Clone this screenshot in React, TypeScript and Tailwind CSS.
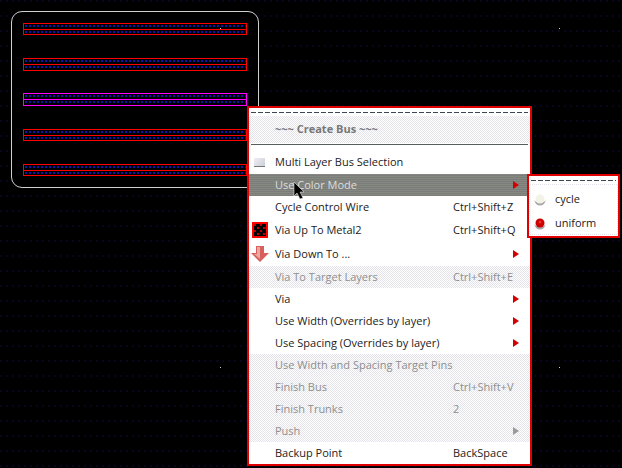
const busRows = [
  { id: "a", height: "h-[12px]", border: "border-[#ff0000]", gap: "" },
  { id: "b", height: "h-[13px]", border: "border-[#ff0000]", gap: "" },
  { id: "c", height: "h-[13px]", border: "border-[#ff00ff]", gap: "-mt-px" },
  { id: "d", height: "h-[12px]", border: "border-[#ff0000]", gap: "" },
  { id: "e", height: "h-[12px]", border: "border-[#ff0000]", gap: "" },
]

const gridMarks = ["left-[220px] top-[28px]", "left-[559px] top-[28px]", "left-[220px] top-[367px]", "left-[559px] top-[367px]"]

const dotted =
  "bg-black bg-[radial-gradient(circle_at_2px_2px,#1414b8_0.7px,transparent_0.8px)] bg-[length:4px_4px]"

const stipple =
  "bg-[repeating-conic-gradient(#e4e3e9_0_25%,#ffffff_0_50%)] bg-[length:2px_2px]"

function Arrow({ disabled }: { disabled?: boolean }) {
  return (
    <svg width="6" height="8" viewBox="0 0 6 8" className="ml-auto mr-[11px] shrink-0">
      <path d="M0 0 L6 4 L0 8 Z" fill={disabled ? "#9a9a9a" : "#d40000"} />
    </svg>
  )
}

function Row({
  label,
  accel,
  arrow,
  disabled,
  active,
  icon,
  height = "h-[22px]",
}: {
  label: string
  accel?: string
  arrow?: boolean
  disabled?: boolean
  active?: boolean
  icon?: React.ReactNode
  height?: string
}) {
  return (
    <div
      className={`flex items-center pl-[3px] ${height} ${
        active
          ? "bg-[repeating-linear-gradient(0deg,#7c7c7c_0_1px,#858a80_1px_2px)] text-[#dcdcdc]"
          : disabled
            ? `${stipple} text-[#8e8e8e]`
            : "text-[#222222]"
      }`}
    >
      <div className="flex w-[23px] shrink-0 items-center">{icon}</div>
      <span className="w-[178px] shrink-0 whitespace-nowrap">{label}</span>
      {accel && <span className="whitespace-nowrap">{accel}</span>}
      {arrow && <Arrow disabled={disabled} />}
    </div>
  )
}

function Tearoff({ className }: { className?: string }) {
  return (
    <div
      className={`h-px bg-[repeating-linear-gradient(90deg,#3c4650_0_5px,transparent_5px_7px)] ${className ?? ""}`}
    />
  )
}

function RadioDot({ on }: { on?: boolean }) {
  return (
    <svg width="12" height="13" viewBox="0 0 12 13" className="shrink-0">
      <path d="M0.5 7 A5.5 5.5 0 0 0 11.5 7 L10 9 H2 Z" fill="#a8a8a8" />
      <circle cx="6" cy="6" r="4.5" fill={on ? "#cc0000" : "#f2f2e6"} />
      {on && <circle cx="6" cy="5" r="1.5" fill="#ee3030" />}
    </svg>
  )
}

export default function App() {
  return (
    <div className="relative h-[468px] w-[622px] overflow-hidden bg-black bg-[radial-gradient(circle_at_1px_1px,#060620_0.8px,transparent_0.9px)] bg-[length:6px_15px] font-['Open_Sans','Noto_Sans',sans-serif] text-[11px]">
      {/* layout canvas */}
      <div className="absolute left-[11px] top-[11px] flex h-[177px] w-[248px] flex-col gap-[23px] rounded-[11px] border border-[#d0d0d0] bg-black pl-[11px] pt-[11px]">
        {busRows.map((row) => (
          <div key={row.id} className={`flex w-[224px] shrink-0 flex-col border ${row.height} ${row.border} ${row.gap}`}>
            <div className={`flex-1 border-b ${row.border} ${dotted}`} />
            <div className={`flex-1 ${dotted}`} />
          </div>
        ))}
      </div>
      {gridMarks.map((pos) => (
        <div key={pos} className={`absolute h-px w-px bg-[#d0d0d0] ${pos}`} />
      ))}

      {/* context menu */}
      <div className="absolute left-[247px] top-[106px] w-[285px] border-2 border-[#e00000] bg-white">
        <Tearoff className="mx-[2px] mt-[4px]" />
        <div className={`mt-[3px] flex h-[27px] items-center pl-[26px] font-bold text-[#777777] ${stipple}`}>
          ~~~ Create Bus ~~~
        </div>
        <div className="mx-[2px] mt-[1px] h-px bg-[#55605a]" />
        <div className="h-[6px]" />
        <Row
          label="Multi Layer Bus Selection"
          icon={<div className="ml-[2px] h-[9px] w-[11px] border-b border-[#777777] bg-[linear-gradient(135deg,#f4ecf4,#c8d0d8)]" />}
        />
        <div className="h-px" />
        <Row label="Use Color Mode" active arrow />
        <Row label="Cycle Control Wire" accel="Ctrl+Shift+Z" />
        <Row
          label="Via Up To Metal2"
          accel="Ctrl+Shift+Q"
          height="h-[24px]"
          icon={
            <div className="h-[16px] w-[16px] border-2 border-[#ff0000] bg-black bg-[radial-gradient(circle_at_1px_1px,#c00000_0.8px,transparent_0.9px),radial-gradient(circle_at_4px_4px,#c00000_0.8px,transparent_0.9px)] bg-[length:6px_6px]" />
          }
        />
        <Row
          label="Via Down To ..."
          arrow
          height="h-[24px]"
          icon={
            <svg width="18" height="16" viewBox="0 0 18 16" className="-ml-px">
              <path d="M5 0 H13 V7 H18 L9 16 L0 7 H5 Z" fill="#d8605c" />
              <path d="M6 1 H9 V13 L3 8 H6 Z" fill="#eca8a2" />
            </svg>
          }
        />
        <Row label="Via To Target Layers" accel="Ctrl+Shift+E" disabled />
        <Row label="Via" arrow />
        <Row label="Use Width (Overrides by layer)" arrow />
        <Row label="Use Spacing (Overrides by layer)" arrow />
        <Row label="Use Width and Spacing Target Pins" disabled />
        <Row label="Finish Bus" accel="Ctrl+Shift+V" disabled />
        <Row label="Finish Trunks" accel="2" disabled />
        <Row label="Push" arrow disabled />
        <Row label="Backup Point" accel="BackSpace" />
      </div>

      {/* cursor */}
      <svg width="12" height="18" viewBox="0 0 12 18" className="absolute left-[293px] top-[181px]">
        <path d="M1 1 V15 L4 12 L7 18 L10 17 L7 11 H11 Z" fill="#000000" stroke="#ffffff" strokeWidth="0.5" />
      </svg>

      {/* submenu */}
      <div className="absolute left-[527px] top-[174px] w-[93px] border-2 border-[#e00000] bg-white pb-px">
        <Tearoff className="mx-[2px] mt-[4px]" />
        <div className={`mt-[3px] p-px ${stipple}`}>
          <div className="flex flex-col gap-[2px] bg-white pt-[3px] text-[#222222]">
            <div className="flex h-[22px] items-center gap-[9px] pl-[4px]">
              <RadioDot />
              <span>cycle</span>
            </div>
            <div className="flex h-[22px] items-center gap-[9px] pl-[4px]">
              <RadioDot on />
              <span>uniform</span>
            </div>
          </div>
        </div>
      </div>
    </div>
  )
}
